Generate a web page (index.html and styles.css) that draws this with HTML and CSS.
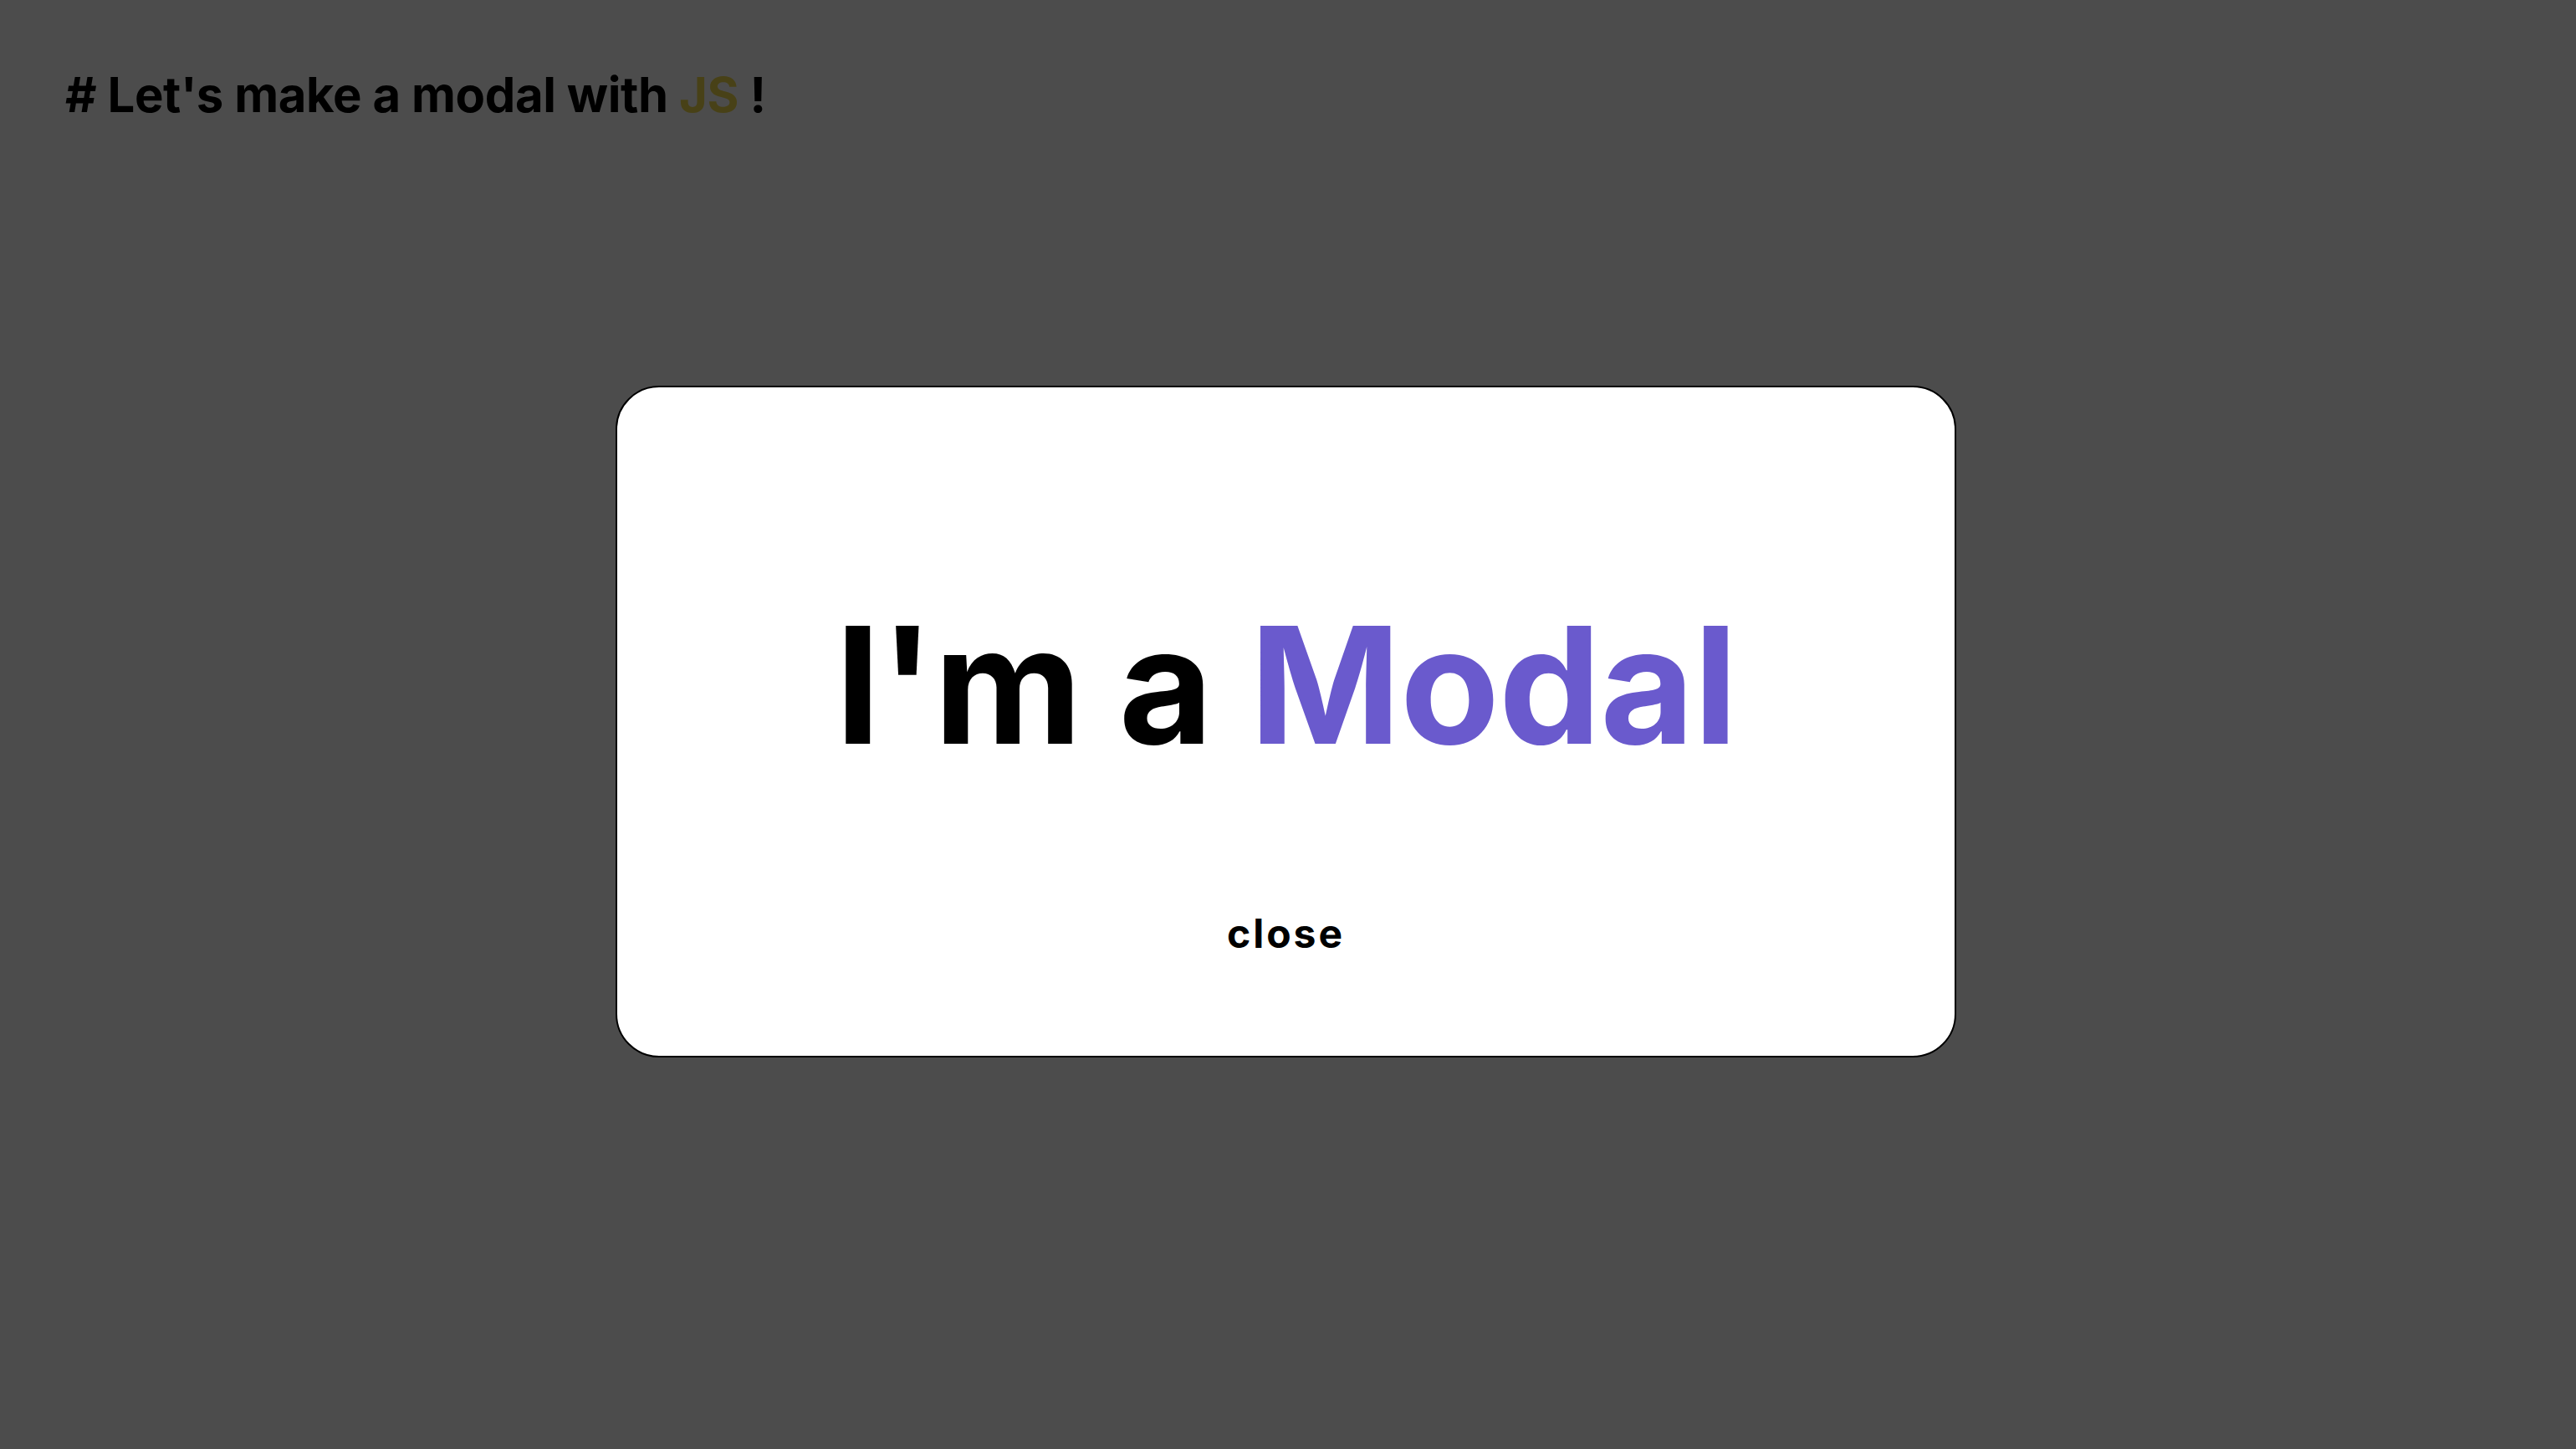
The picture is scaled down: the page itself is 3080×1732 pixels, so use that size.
FILE: index.html
```html
<!DOCTYPE html>
<html lang="en">
<head>
<meta charset="utf-8">
<title>Modal</title>
<link rel="stylesheet" href="styles.css">
</head>
<body>
<main class="page">
  <h1 class="heading"># Let's make a modal with <span class="js">JS</span> !</h1>
</main>
<div class="overlay">
  <div class="modal">
    <h2 class="modal-title">I'm a <span class="accent">Modal</span></h2>
    <button class="close-btn" type="button">close</button>
  </div>
</div>
</body>
</html>
```
FILE: styles.css
```css
html, body {
  margin: 0;
  padding: 0;
  height: 100%;
}
body {
  background: #ffffff;
  font-family: Inter, "Noto Sans", sans-serif;
}
.page {
  padding: 78px 78px;
}
.heading {
  margin: 0;
  font-size: 58px;
  font-weight: 700;
  line-height: 1.21;
  letter-spacing: -0.4px;
  color: #000000;
}
.js {
  color: #f0db4f;
}
.overlay {
  position: fixed;
  inset: 0;
  background: rgba(0, 0, 0, 0.7);
  display: flex;
  align-items: center;
  justify-content: center;
}
.modal {
  box-sizing: border-box;
  width: 1603px;
  height: 803px;
  margin-top: -8px;
  margin-left: -5px;
  background: #ffffff;
  border: 2px solid #000000;
  border-radius: 52px;
  display: flex;
  flex-direction: column;
  align-items: center;
  padding-top: 259px;
  gap: 176px;
}
.modal-title {
  margin: 0;
  font-size: 194px;
  line-height: 1;
  font-weight: 700;
  letter-spacing: -1px;
  color: #000000;
}
.accent {
  color: #6a5acd;
}
.close-btn {
  margin: 0;
  padding: 0;
  border: none;
  background: none;
  font-family: Inter, "Noto Sans", sans-serif;
  font-size: 48px;
  line-height: 1;
  font-weight: 700;
  letter-spacing: 3px;
  color: #000000;
  cursor: pointer;
}
```
